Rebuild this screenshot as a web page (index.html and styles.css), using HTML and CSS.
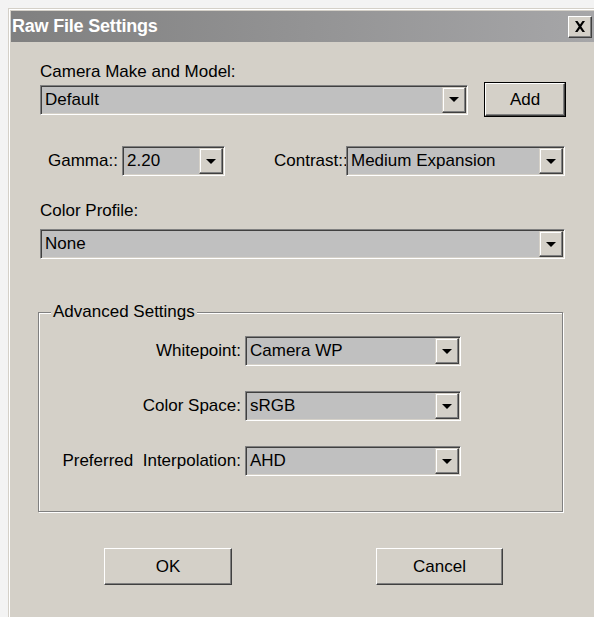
FILE: index.html
```html
<!DOCTYPE html>
<html lang="en">
<head>
<meta charset="utf-8">
<title>Raw File Settings</title>
<link rel="stylesheet" href="styles.css">
</head>
<body>
<div class="window">
  <div class="titlebar">
    <span class="title">Raw File Settings</span>
    <button class="close" type="button" aria-label="Close">
      <svg width="12" height="11" viewBox="0 0 12 11"><path d="M1 0h2.5L6 3.5 8.5 0H11L7.3 5.5 11 11H8.5L6 7.5 3.5 11H1l3.7-5.5z" fill="#000"/></svg>
    </button>
  </div>

  <div class="content">
    <div class="label cam-label">Camera Make and Model:</div>
    <div class="row cam-row">
      <div class="combo combo-camera"><span class="value">Default</span><span class="drop"><svg width="10" height="5" viewBox="0 0 10 5"><path d="M0 0h10L5 5z"/></svg></span></div>
      <button class="btn btn-add" type="button">Add</button>
    </div>

    <div class="row tone-row">
      <span class="label gamma-label">Gamma::</span>
      <div class="combo combo-gamma"><span class="value">2.20</span><span class="drop"><svg width="10" height="5" viewBox="0 0 10 5"><path d="M0 0h10L5 5z"/></svg></span></div>
      <span class="label contrast-label">Contrast::</span>
      <div class="combo combo-contrast"><span class="value">Medium Expansion</span><span class="drop"><svg width="10" height="5" viewBox="0 0 10 5"><path d="M0 0h10L5 5z"/></svg></span></div>
    </div>

    <div class="label profile-label">Color Profile:</div>
    <div class="combo combo-profile"><span class="value">None</span><span class="drop"><svg width="10" height="5" viewBox="0 0 10 5"><path d="M0 0h10L5 5z"/></svg></span></div>

    <fieldset class="group">
      <legend>Advanced Settings</legend>
      <div class="field">
        <span class="field-label">Whitepoint:</span>
        <div class="combo combo-adv"><span class="value">Camera WP</span><span class="drop"><svg width="10" height="5" viewBox="0 0 10 5"><path d="M0 0h10L5 5z"/></svg></span></div>
      </div>
      <div class="field">
        <span class="field-label">Color Space:</span>
        <div class="combo combo-adv"><span class="value">sRGB</span><span class="drop"><svg width="10" height="5" viewBox="0 0 10 5"><path d="M0 0h10L5 5z"/></svg></span></div>
      </div>
      <div class="field">
        <span class="field-label">Preferred&nbsp; Interpolation:</span>
        <div class="combo combo-adv"><span class="value">AHD</span><span class="drop"><svg width="10" height="5" viewBox="0 0 10 5"><path d="M0 0h10L5 5z"/></svg></span></div>
      </div>
    </fieldset>

    <div class="actions">
      <button class="btn btn-ok" type="button">OK</button>
      <button class="btn btn-cancel" type="button">Cancel</button>
    </div>
  </div>
</div>
</body>
</html>
```

FILE: styles.css
```css
html, body {
  margin: 0;
  padding: 0;
  background: #f3f3f3;
}

body {
  padding: 8px 0 0 8px;
  height: 617px;
  box-sizing: border-box;
  overflow: hidden;
  font-family: "Liberation Sans", Arial, sans-serif;
  font-size: 17px;
  color: #000;
}

/* Dialog frame: classic raised window edge */
.window {
  height: 609px;
  background: #d4d0c8;
  border-left: 1px solid #d4d0c8;
  border-top: 1px solid #d4d0c8;
  box-shadow: inset 1px 1px #fff;
  padding: 2px 0 0 2px;
  box-sizing: border-box;
}

/* Inactive caption with gradient */
.titlebar {
  height: 31px;
  background: linear-gradient(to right, #808080, #a6a6a8);
  display: flex;
  align-items: center;
  justify-content: space-between;
  padding: 0 2px 0 1px;
}

.title {
  color: #fff;
  font-weight: bold;
  font-size: 18px;
  letter-spacing: -0.2px;
}

.close {
  width: 24px;
  height: 22px;
  padding: 0;
  margin: 0;
  background: #d4d0c8;
  border: 1px solid;
  border-color: #fff #404040 #404040 #fff;
  box-shadow: inset -1px -1px #808080, inset 1px 1px #d4d0c8;
  display: flex;
  align-items: center;
  justify-content: center;
}

.content {
  padding: 0 0 0 29px;
  display: flex;
  flex-direction: column;
  align-items: flex-start;
}

.label {
  line-height: 20px;
  white-space: nowrap;
}

.cam-label {
  margin-top: 20px;
}

.row {
  display: flex;
  align-items: center;
}

/* Sunken drop-down list */
.combo {
  height: 30px;
  box-sizing: border-box;
  background: #c0c0c0;
  border: 1px solid;
  border-color: #808080 #fff #fff #808080;
  box-shadow: inset 1px 1px #404040, inset -1px -1px #d4d0c8;
  padding: 1px;
  display: flex;
  align-items: stretch;
}

.combo .value {
  flex: 1;
  padding-left: 3px;
  line-height: 26px;
  white-space: nowrap;
  overflow: hidden;
}

.combo .drop {
  width: 24px;
  box-sizing: border-box;
  background: #d4d0c8;
  border: 1px solid;
  border-color: #d4d0c8 #404040 #404040 #d4d0c8;
  box-shadow: inset -1px -1px #808080, inset 1px 1px #fff;
  display: flex;
  align-items: center;
  justify-content: center;
}

.combo .drop svg {
  fill: #000;
}

.cam-row {
  margin-top: 0;
  height: 35px;
}

.combo-camera {
  width: 428px;
}

/* Push button */
.btn {
  font-family: "Liberation Sans", Arial, sans-serif;
  font-size: 17px;
  color: #000;
  background: #d4d0c8;
  border: 1px solid;
  border-color: #fff #404040 #404040 #fff;
  box-shadow: inset -1px -1px #808080, inset 1px 1px #d4d0c8;
  padding: 0;
  margin: 0;
}

.btn-add {
  width: 80px;
  height: 33px;
  margin-left: 17px;
  outline: 1px solid #000;
}

.tone-row {
  margin-top: 29px;
  padding-left: 8px;
}

.gamma-label {
  width: 74px;
}

.combo-gamma {
  width: 103px;
}

.contrast-label {
  margin-left: 49px;
  width: 72px;
}

.combo-contrast {
  width: 219px;
}

.profile-label {
  margin-top: 25px;
}

.combo-profile {
  width: 525px;
  margin-top: 8px;
}

/* Etched group box */
.group {
  margin: 43px 0 0 -2px;
  padding: 14px 0 35px 0;
  width: 525px;
  box-sizing: border-box;
  border: 1px solid #808080;
  box-shadow: inset 1px 1px #fff, 1px 1px #fff;
  display: flex;
  flex-direction: column;
  gap: 25px;
}

.group legend {
  margin-left: 12px;
  padding: 0 2px;
  line-height: 20px;
  background: #d4d0c8;
}

.field {
  display: flex;
  align-items: center;
}

.field-label {
  width: 202px;
  text-align: right;
  margin-right: 4px;
  white-space: nowrap;
}

.combo-adv {
  width: 216px;
}

.actions {
  margin-top: 36px;
  padding-left: 64px;
  display: flex;
  gap: 144px;
}

.btn-ok {
  width: 128px;
  height: 37px;
}

.btn-cancel {
  width: 127px;
  height: 37px;
}
```
